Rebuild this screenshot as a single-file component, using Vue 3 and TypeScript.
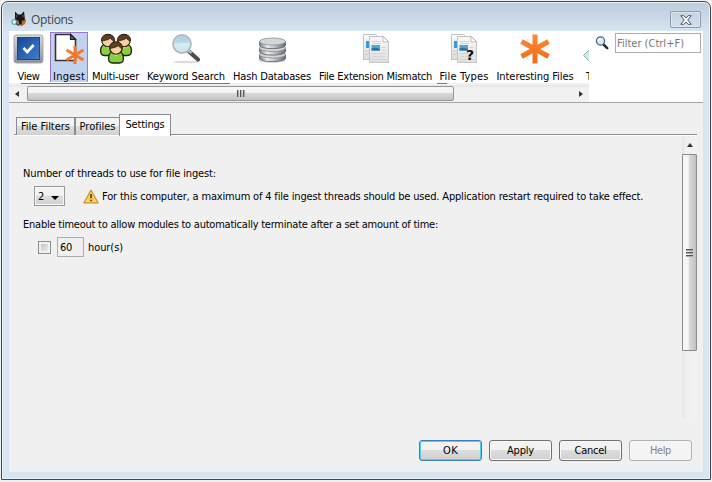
<script setup lang="ts">
import { ref } from 'vue'

interface Category {
  id: string
  label: string
  cell: number
  text: number
}

const categories: Category[] = [
  { id: 'view', label: 'View', cell: 41, text: 22 },
  { id: 'ingest', label: 'Ingest', cell: 38, text: 32 },
  { id: 'users', label: 'Multi-user', cell: 55, text: 47 },
  { id: 'search', label: 'Keyword Search', cell: 86, text: 78 },
  { id: 'hash', label: 'Hash Databases', cell: 86, text: 78 },
  { id: 'mismatch', label: 'File Extension Mismatch', cell: 121, text: 113 },
  { id: 'types', label: 'File Types', cell: 56, text: 49 },
  { id: 'interesting', label: 'Interesting Files', cell: 86, text: 77 },
  { id: 'tags', label: 'T', cell: 40, text: 6 },
]
const tabs = [
  { label: 'File Filters', text: 49 },
  { label: 'Profiles', text: 36 },
  { label: 'Settings', text: 39 },
]
const buttons = [
  { label: 'OK', text: 15, kind: 'primary' },
  { label: 'Apply', text: 27, kind: '' },
  { label: 'Cancel', text: 32, kind: '' },
  { label: 'Help', text: 21, kind: 'disabled' },
]
const selected = ref('ingest')
const tab = ref('Settings')

// Spreads the letters of a label over the given width in pixels.
const vFit = {
  mounted(el: HTMLElement, binding: { value: number }) {
    const count = (el.textContent ?? '').trim().length
    const natural = el.getBoundingClientRect().width
    el.style.letterSpacing = `${(binding.value - natural) / count}px`
  },
}
</script>

<template>
  <div class="desk">
    <div class="window">
      <header class="title">
        <svg class="dog" width="16" height="16" viewBox="0 0 16 16">
          <path d="M4 .5l3 3h3l3-3.200.8 7L14 10l-3 2H6L4 8z" fill="#17191d" />
          <path d="M5 3l1.500 2L5 7zM12.500 3L11 5l1.500 2z" fill="#765245" />
          <path d="M4.500 8.500L8 10l1.200 1.500L10.500 10l5-1.500-1.500 4.500-3 2-4-1z" fill="#c46a28" />
          <path d="M7.500 9.500h3.500l-.5 4h-2z" fill="#141518" />
          <circle cx="3.200" cy="11" r="2.400" fill="#d5f4f7" stroke="#3c8fa3" />
          <path d="M5 12.700l3 1.800" stroke="#29424b" stroke-width="1.400" />
        </svg>
        <span class="caption"><span v-fit="42" class="fit">Options</span></span>
        <button class="close" aria-label="Close">
          <svg width="12" height="10" viewBox="0 0 12 10">
            <path d="M.8.7h3L6 3 8.200.7h3L7.700 5l3.500 4.300h-3L6 7 3.800 9.300h-3L4.300 5z" fill="#fff" stroke="#4b5568" />
          </svg>
        </button>
      </header>

      <main class="client">
        <section class="toolbar">
          <div class="scroller">
            <div class="items">
              <div
                v-for="c in categories"
                :key="c.id"
                class="item"
                :class="{ on: selected === c.id }"
                :style="{ width: c.cell + 'px' }"
                @click="selected = c.id"
              >
                <svg class="pic" width="32" height="32" viewBox="0 0 32 32">
                  <defs>
                    <linearGradient id="blue" x1="0" y1="0" x2="1" y2="1">
                      <stop offset="0" stop-color="#174795" /><stop offset="1" stop-color="#3f7fd0" />
                    </linearGradient>
                    <linearGradient id="silver" x1="0" y1="0" x2="0" y2="1">
                      <stop offset="0" stop-color="#d8dade" /><stop offset="1" stop-color="#8d9096" />
                    </linearGradient>
                    <linearGradient id="metal" x1="0" y1="0" x2="1" y2="0">
                      <stop offset="0" stop-color="#777c82" /><stop offset=".3" stop-color="#eef0f1" />
                      <stop offset=".6" stop-color="#b9bdc2" /><stop offset="1" stop-color="#666b72" />
                    </linearGradient>
                    <linearGradient id="orange" x1="0" y1="0" x2="0" y2="1">
                      <stop offset="0" stop-color="#ff8a35" /><stop offset="1" stop-color="#f06a17" />
                    </linearGradient>
                    <linearGradient id="paper" x1="0" y1="0" x2="0" y2="1">
                      <stop offset="0" stop-color="#fafafa" /><stop offset="1" stop-color="#dedede" />
                    </linearGradient>
                    <linearGradient id="lens" x1="0" y1="0" x2="0" y2="1">
                      <stop offset="0" stop-color="#b5d7e8" /><stop offset=".5" stop-color="#d9ecf4" /><stop offset="1" stop-color="#c5e1ee" />
                    </linearGradient>
                  </defs>
                  <g v-if="c.id === 'view'">
                    <rect x="1" y="2" width="29" height="28" rx="2.500" fill="url(#silver)" stroke="#a7a9ad" />
                    <rect x="4.500" y="4.500" width="22" height="22" fill="url(#blue)" stroke="#214681" />
                    <path d="M10.500 15l3.700 4 6.500-7" fill="none" stroke="#fff" stroke-width="2.600" />
                  </g>
                  <g v-else-if="c.id === 'ingest'">
                    <path d="M2.500 1.500h15l5 5v21h-20z" fill="#fff" stroke="#333" stroke-width="1.600" />
                    <path d="M17.500 1.500v5h5z" fill="#666" stroke="#222" stroke-width="1.200" />
                    <path d="M22 13v18M13.500 17l17 10M30.500 17l-17 10" stroke="#f4792b" stroke-width="3" />
                  </g>
                  <g v-else-if="c.id === 'users'">
                    <g v-for="(p, i) in [[8, 0], [24, 0], [16, 7.500]]" :key="i" :transform="`translate(${p[0]} ${p[1]})`">
                      <path d="M-4 11.500Q-7.400 13-7.400 18q0 4.500 4 4.500h6.800q4 0 4-4.500 0-5-3.400-6.500z" fill="#8ccf3c" stroke="#172410" stroke-width="1.300" />
                      <path d="M-3 12l3 4 3-4z" fill="#f0e4d4" />
                      <circle cx="0" cy="7.500" r="6.200" fill="#f8cfa4" stroke="#22180e" stroke-width="1.100" />
                      <path d="M-6.500 8C-8-.5 8-.5 6.500 8 5 8 3.500 7 2.500 5.200-.5 7-3 7.500-6.500 8z" fill="#5e3f20" stroke="#21150c" stroke-width=".6" />
                    </g>
                  </g>
                  <g v-else-if="c.id === 'search'">
                    <ellipse cx="16" cy="29" rx="13" ry="1.300" fill="#ddd" />
                    <path d="M19 18.500l9 8" stroke="#4a4d51" stroke-width="4.200" stroke-linecap="round" />
                    <path d="M17.500 17l4 3" stroke="#bbb" stroke-width="2.500" />
                    <circle cx="12" cy="11" r="9" fill="url(#lens)" stroke="#b4b9bd" stroke-width="1.800" />
                    <path d="M4.500 11a7.500 7.500 0 0115-1q-7-1-15 1z" fill="#a7cde1" opacity=".6" />
                  </g>
                  <g v-else-if="c.id === 'hash'">
                    <ellipse cx="16" cy="27" rx="14" ry="3" fill="#ddd" />
                    <g v-for="y in [16, 9.500, 3]" :key="y" :transform="`translate(.5 ${y})`">
                      <path d="M3 5.500V9c0 4.800 26 4.800 26 0V5.500z" fill="url(#metal)" stroke="#555b62" stroke-width=".8" />
                      <ellipse cx="16" cy="5.500" rx="13" ry="3.500" fill="#d4d7da" stroke="#8a9096" stroke-width=".8" />
                    </g>
                  </g>
                  <g v-else-if="c.id === 'mismatch' || c.id === 'types'">
                    <path d="M3.500 1.500h12l5 5v20h-17z" fill="url(#paper)" stroke="#c4c4c4" />
                    <path d="M6 8h4v7H6z" fill="#3e98d8" />
                    <path d="M5 18h4M5 21h4" stroke="#ccc" />
                    <path d="M9.500 3.500h14l5 5v21h-19z" fill="url(#paper)" stroke="#c4c4c4" />
                    <path d="M23 3.500V9h5.500z" fill="#fff" stroke="#aaa" stroke-width=".7" />
                    <path d="M12 8.500h9m-9 2h9M12 20.500h14m-14 3h14m-14 3h14m-5-12h5m-5 3h5" stroke="#d6d6d6" />
                    <path d="M11.500 12h8.500v5.500h-8.500z" fill="#4ba7e4" />
                    <path d="M11.500 15.500l4-.7 4.500 1.200v1.500h-8.500z" fill="#29709b" />
                    <text v-if="c.id === 'types'" x="18" y="27" class="mark">?</text>
                  </g>
                  <g v-else-if="c.id === 'interesting'">
                    <path d="M16 1.500v29M2.500 8.500l27 15M29.500 8.500l-27 15" stroke="url(#orange)" stroke-width="5" />
                  </g>
                  <g v-else>
                    <path d="M2.500 23.500l7-7h18v14h-18z" fill="#cfe9e6" stroke="#8fb1af" transform="translate(0 -1)" />
                  </g>
                </svg>
                <span v-fit="c.text" class="fit name">{{ c.label }}</span>
              </div>
            </div>
            <div class="rule"><i class="long"></i><i class="short"></i></div>
            <div class="hbar">
              <i class="arrow left"></i>
              <div class="hthumb"><i></i><i></i><i></i></div>
              <i class="arrow right"></i>
            </div>
          </div>
          <div class="filter">
            <svg width="14" height="14" viewBox="0 0 14 14">
              <path d="M8.500 8.500l3.700 3.700" stroke="#252b31" stroke-width="2.500" stroke-linecap="round" />
              <circle cx="5.500" cy="5" r="4.100" fill="#d3edf9" stroke="#4b667b" stroke-width="1.300" />
              <path d="M3.200 5a2.500 2.500 0 012.300-2.400" fill="none" stroke="#fff" stroke-width="1.200" />
            </svg>
            <div class="query"><span v-fit="67" class="fit">Filter (Ctrl+F)</span></div>
          </div>
        </section>

        <nav class="tabs">
          <div v-for="t in tabs" :key="t.label" class="tab" :class="{ active: tab === t.label }" @click="tab = t.label">
            <span v-fit="t.text" class="fit">{{ t.label }}</span>
          </div>
        </nav>

        <section class="pane">
          <div class="form">
            <p class="line"><span v-fit="193" class="fit">Number of threads to use for file ingest:</span></p>
            <div class="threads">
              <div class="combo"><span>2</span><i></i></div>
              <svg width="16" height="15" viewBox="0 0 16 15">
                <path d="M8 1.200L15 13.800H1z" fill="#ffe58a" stroke="#c98e20" stroke-width="1.300" stroke-linejoin="round" />
                <path d="M8 3.500l5 9H3z" fill="#f9d04d" />
                <path d="M8 5v4.300M8 10.700v1.500" stroke="#604412" stroke-width="1.800" />
              </svg>
              <span v-fit="541" class="fit low">For this computer, a maximum of 4 file ingest threads should be used. Application restart required to take effect.</span>
            </div>
            <p class="line second"><span v-fit="415" class="fit">Enable timeout to allow modules to automatically terminate after a set amount of time:</span></p>
            <div class="timeout">
              <i class="check"></i>
              <div class="hours"><span v-fit="12" class="fit">60</span></div>
              <span v-fit="35" class="fit low">hour(s)</span>
            </div>
          </div>
          <div class="vbar">
            <i class="arrow up"></i>
            <div class="vthumb"><i></i><i></i><i></i></div>
          </div>
        </section>

        <footer class="actions">
          <button v-for="b in buttons" :key="b.label" class="btn" :class="b.kind">
            <span v-fit="b.text" class="fit">{{ b.label }}</span>
          </button>
        </footer>
      </main>
    </div>
  </div>
</template>

<style>
body {
  margin: 0;
  overflow: hidden;
}
</style>

<style scoped>
* {
  box-sizing: border-box;
}
.desk {
  width: 712px;
  height: 482px;
  padding: 1px 1px 2px;
  background: #f0f1ef;
  font: 11px/14px "DejaVu Sans Condensed", "DejaVu Sans", sans-serif;
  color: #000;
}
.fit {
  display: inline-block;
  white-space: nowrap;
}
.low {
  padding-top: 2px;
}
.window {
  width: 710px;
  height: 479px;
  border: 1px solid #45474c;
  border-radius: 7px 7px 0 0;
  background: linear-gradient(#bdccda 0, #d7e4f2 29px);
  box-shadow: inset 0 0 0 1px #eaf3fb;
  padding: 0 7px 7px;
}
.title {
  height: 29px;
  display: flex;
  align-items: flex-start;
}
.dog {
  margin: 9px 0 0 2px;
}
.caption {
  font: 12px/16px "Open Sans", "Noto Sans", sans-serif;
  color: #3c444d;
  margin: 10px 0 0 4px;
}
.close {
  margin: 9px 2px 0 auto;
  width: 31px;
  height: 17px;
  padding: 0;
  border: 1px solid #8c9bae;
  border-radius: 2px;
  background: linear-gradient(#c5d3e2, #d2dfec);
  box-shadow: inset 0 0 0 1px #dbe6f0;
  display: flex;
  align-items: center;
  justify-content: center;
}
.client {
  width: 694px;
  height: 441px;
  background: #f0f0f0;
}
.toolbar {
  height: 72px;
  display: flex;
  background: #fff;
  border-bottom: 1px solid #a5a5a5;
}
.scroller {
  width: 580px;
  overflow: hidden;
}
.items {
  display: flex;
  height: 51px;
  width: 580px;
  overflow: hidden;
}
.item {
  flex: none;
  height: 50px;
  margin-top: 1px;
  display: flex;
  flex-direction: column;
  align-items: center;
  padding-top: 1px;
}
.item:first-child {
  padding-right: 2px;
}
.item:last-child {
  align-items: flex-start;
  padding-left: 8px;
}
.item:last-child .pic {
  margin-left: -5px;
}
.pic {
  flex: none;
  display: block;
}
.item.on {
  background: #c1d2ee;
  border: 1px solid #9a78c6;
  border-bottom-color: #c1d2ee;
  padding-top: 0;
}
.name {
  flex: none;
  margin-top: 7px;
  line-height: 10px;
}
.mark {
  font: bold 14px "DejaVu Sans", sans-serif;
  fill: #111;
}
.rule {
  height: 3px;
  display: flex;
  background: linear-gradient(#fff 1px, #ededed 1px, #f4f4f4);
}
.rule i {
  height: 1px;
  margin-top: 1px;
  background: #4e83a5;
}
.rule .long {
  width: 209px;
  margin-left: 12px;
}
.rule .short {
  width: 10px;
  margin-left: 207px;
}
.hbar {
  height: 17px;
  display: flex;
  align-items: center;
  background: linear-gradient(#e6e6e6, #f1f1f1 3px);
}
.arrow {
  width: 0;
  height: 0;
  border: 3.5px solid transparent;
}
.arrow.left {
  border-width: 3.5px 4px 3.5px 0;
  border-right-color: #333;
  margin: 0 8px 0 6px;
}
.arrow.right {
  border-width: 3.5px 0 3.5px 4px;
  border-left-color: #333;
  margin-left: auto;
  margin-right: 6px;
}
.hthumb {
  width: 427px;
  height: 15px;
  border: 1px solid #959595;
  border-radius: 2px;
  background: linear-gradient(#f5f5f5 0 40%, #d9d9dc 50%, #c4c4c8);
  display: flex;
  justify-content: center;
  align-items: center;
  gap: 1px;
}
.hthumb i {
  width: 2px;
  height: 7px;
  border-left: 1px solid #555;
  border-right: 1px solid #aaa;
}
.filter {
  display: flex;
  flex: 1;
  align-items: flex-start;
}
.filter svg {
  margin: 5px 6px 0;
}
.query {
  width: 86px;
  height: 20px;
  margin-top: 2px;
  border: 1px solid #abadb3;
  padding: 3px 1px 0;
  color: #777;
}
.tabs {
  height: 32px;
  padding-left: 7px;
  display: flex;
  align-items: flex-end;
}
.tab {
  height: 18px;
  border: 1px solid #898c95;
  border-bottom: 0;
  background: linear-gradient(#f3f3f3 0 45%, #dedede 50%, #d1d1d1);
  width: 59px;
  display: flex;
  justify-content: center;
  padding-top: 2px;
}
.tab:nth-child(2) {
  width: 45px;
}
.tab.active {
  width: 52px;
  height: 22px;
  margin: 0 0 -1px -1px;
  padding-top: 3px;
  background: #fff;
  z-index: 1;
}
.pane {
  margin-left: 5px;
  width: 683px;
  height: 283px;
  margin-top: -1px;
  border-top: 1px solid #898c95;
  box-shadow: inset 0 1px #fff;
  display: flex;
}
.form {
  width: 668px;
  padding: 32px 0 0 9px;
}
.line {
  margin: 0;
  height: 14px;
}
.threads {
  height: 20px;
  display: flex;
  align-items: center;
  margin: 5px 0 0 11px;
}
.combo {
  width: 31px;
  height: 20px;
  border: 1px solid #999;
  box-shadow: inset 0 0 0 1px #f7f7f7;
  background: linear-gradient(#f3f3f3 0 45%, #dedede 50%, #d1d1d1);
  display: flex;
  align-items: center;
  justify-content: space-between;
  padding: 1px 5px 0 3px;
}
.combo i {
  border: 4px solid transparent;
  border-bottom-width: 0;
  border-top-color: #000;
  margin-top: 2px;
}
.threads svg {
  margin: 0 3px 0 18px;
}
.second {
  margin-top: 12px;
}
.timeout {
  display: flex;
  align-items: center;
  height: 20px;
  margin: 5px 0 0 15px;
}
.check {
  width: 13px;
  height: 13px;
  border: 1px solid #8e8f8f;
  background: linear-gradient(135deg, #b9bdc2, #f3f3f3);
  box-shadow: inset 0 0 0 2px #f1f1f1;
}
.hours {
  width: 27px;
  height: 20px;
  border: 1px solid #abadb3;
  margin: 0 4px 0 6px;
  padding: 3px 2px 0;
}
.vbar {
  width: 15px;
  height: 282px;
  margin-top: 1px;
  background: linear-gradient(90deg, #e4e4e4, #efefef 3px, #f2f2f2);
  display: flex;
  flex-direction: column;
  align-items: center;
}
.arrow.up {
  border-width: 0 3.5px 4px;
  border-bottom-color: #333;
  margin: 7px 0;
}
.vthumb {
  width: 15px;
  height: 197px;
  border: 1px solid #8c8c8c;
  border-radius: 1px;
  background: linear-gradient(90deg, #f5f5f5 0 40%, #d9d9dc 50%, #c0c0c4);
  display: flex;
  flex-direction: column;
  justify-content: center;
  align-items: center;
  gap: 1px;
}
.vthumb i {
  width: 7px;
  height: 2px;
  border-top: 1px solid #555;
  border-bottom: 1px solid #aaa;
}
.actions {
  display: flex;
  justify-content: flex-end;
  gap: 7px;
  padding: 23px 11px 0 0;
}
.btn {
  width: 63px;
  height: 21px;
  padding: 0;
  border: 1px solid #707070;
  border-radius: 3px;
  background: linear-gradient(#f2f2f2 0 45%, #dddddd 50%, #cfcfcf);
  box-shadow: inset 0 0 0 1px #f8f8f8;
  font: inherit;
  color: #000;
}
.btn.primary {
  border-color: #3c7fb1;
  box-shadow: inset 0 0 0 1px #4dd0f5;
}
.btn.disabled {
  border-color: #adb2b5;
  background: #f4f4f4;
  color: #838383;
}
</style>
